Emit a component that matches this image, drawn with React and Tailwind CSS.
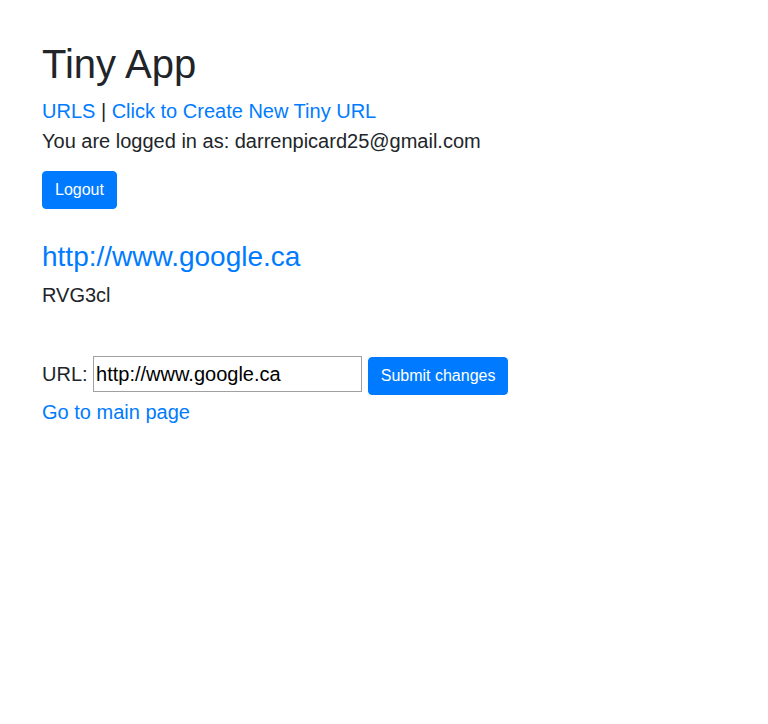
export default function App() {
  return (
    <div className="min-h-[724px] bg-white text-[#212529] text-[20px] leading-[1.5]" style={{ fontFamily: '"Liberation Sans", Arial, sans-serif' }}>
      <div className="pl-[42px] pt-[40px] flex flex-col items-start">
        <h1 className="text-[40px] leading-[1.2] font-normal mb-2">Tiny App</h1>
        <div>
          <a href="#" className="text-[#007bff]">URLS</a> | <a href="#" className="text-[#007bff]">Click to Create New Tiny URL</a>
        </div>
        <div>You are logged in as: darrenpicard25@gmail.com</div>
        <button className="mt-[15px] bg-[#007bff] text-white text-[16px] leading-[24px] px-3 py-[6px] rounded-[4px] border border-[#007bff]">Logout</button>
        <h3 className="mt-[31px] text-[28px] leading-[1.2] font-normal mb-[6px]">
          <a href="#" className="text-[#007bff]">http://www.google.ca</a>
        </h3>
        <div>RVG3cl</div>
        <div className="mt-[46px] flex items-baseline">
          <span>URL:</span>
          <input
            defaultValue="http://www.google.ca"
            className="ml-[5.5px] w-[269px] border border-[#a0a0a0] px-[2px] py-[2px] text-black text-[20px] leading-[30px] outline-none"
          />
          <button className="ml-[6px] w-[140px] bg-[#007bff] text-white text-[16px] leading-[24px] py-[6px] rounded-[4px] border border-[#007bff]">Submit changes</button>
        </div>
        <a href="#" className="mt-[2px] text-[#007bff]">Go to main page</a>
      </div>
    </div>
  );
}
